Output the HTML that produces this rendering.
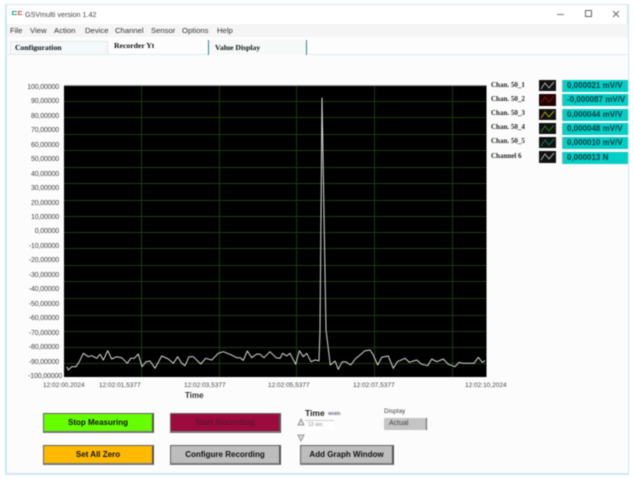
<!DOCTYPE html>
<html><head><meta charset="utf-8">
<style>
html,body{margin:0;padding:0;background:#fff;}
body{width:634px;height:479px;overflow:hidden;position:relative;font-family:"Liberation Sans",sans-serif;}
#w{position:absolute;left:0;top:0;width:634px;height:479px;filter:blur(0.6px);overflow:hidden;}
.a{position:absolute;white-space:nowrap;}
.m{font-size:7.7px;color:#333;top:25px;line-height:11px;}
.t{font:bold 7.7px "Liberation Serif",serif;color:#111;line-height:10px;}
.y{font:7px "Liberation Sans",sans-serif;color:#444;left:20px;width:39px;text-align:right;line-height:9px;letter-spacing:-.15px;}
.x{font:6.5px "Liberation Sans",sans-serif;color:#444;top:381px;line-height:9px;}
.l{font:bold 7px "Liberation Serif",serif;color:#222;left:491px;line-height:9px;}
.v{left:562px;width:66px;height:12px;background:#03cfc6;border-left:1px solid #9aa;font:bold 8px "Liberation Sans",sans-serif;color:#043c42;line-height:12px;padding-left:4px;box-sizing:border-box;}
.b{box-sizing:border-box;border:1px solid #666;border-right:2px solid #555;border-bottom:2px solid #777;font:bold 8px "Liberation Sans",sans-serif;text-align:center;color:#111;height:20px;line-height:17px;}
</style></head><body><div id="w">
<div class="a" style="left:5px;top:4px;width:624px;height:471px;box-sizing:border-box;border:2px solid #cfe6f2;border-top:1px solid #d5e9f3;background:#fff;"></div>
<div class="a" style="left:7px;top:24px;width:621px;height:13px;background:#f5f5f5;"></div>
<div class="a" style="left:7px;top:37px;width:621px;height:17px;background:#fdfdfd;"></div>
<div class="a" style="left:8px;top:54px;width:620px;height:419px;background:#fcfcfc;border-top:1px solid #dcecee;box-sizing:border-box;"></div>

<div class="a" style="left:12px;top:11px;width:5px;height:4px;border:1px solid #18a08c;border-right:0;box-sizing:border-box;"></div>
<div class="a" style="left:18px;top:11px;width:4px;height:4px;border:1px solid #d05050;border-right:0;box-sizing:border-box;"></div>
<div class="a" style="left:25px;top:9px;font-size:7.2px;color:#444;line-height:11px;">GSVmulti version 1.42</div>
<div class="a" style="left:557px;top:14px;width:7px;height:1px;background:#777;"></div>
<div class="a" style="left:585px;top:10px;width:7px;height:7px;border:1px solid #666;box-sizing:border-box;"></div>
<svg class="a" style="left:612px;top:10px;" width="8" height="8"><path d="M1 1L7 7M7 1L1 7" stroke="#666" stroke-width="1"/></svg>

<div class="a m" style="left:10px;">File</div>
<div class="a m" style="left:30px;">View</div>
<div class="a m" style="left:54px;">Action</div>
<div class="a m" style="left:85px;">Device</div>
<div class="a m" style="left:115px;">Channel</div>
<div class="a m" style="left:151px;">Sensor</div>
<div class="a m" style="left:182px;">Options</div>
<div class="a m" style="left:217px;">Help</div>

<div class="a" style="left:10px;top:41px;width:98px;height:13px;background:#f5f8f8;border:1px solid #d8ebea;border-bottom:0;box-sizing:border-box;"></div>
<div class="a" style="left:208px;top:40px;width:99px;height:15px;background:#f7f9f9;border-left:1px solid #2f8b84;border-right:1px solid #2f8b84;box-sizing:border-box;"></div>
<div class="a t" style="left:15px;top:43px;">Configuration</div>
<div class="a t" style="left:114px;top:41px;">Recorder Yt</div>
<div class="a t" style="left:215px;top:43px;">Value Display</div>

<div class="a y" style="top:83px;">100,00000</div>
<div class="a y" style="top:97px;">90,00000</div>
<div class="a y" style="top:112px;">80,00000</div>
<div class="a y" style="top:126px;">70,00000</div>
<div class="a y" style="top:141px;">60,00000</div>
<div class="a y" style="top:155px;">50,00000</div>
<div class="a y" style="top:170px;">40,00000</div>
<div class="a y" style="top:184px;">30,00000</div>
<div class="a y" style="top:199px;">20,00000</div>
<div class="a y" style="top:213px;">10,00000</div>
<div class="a y" style="top:227px;">0,00000</div>
<div class="a y" style="top:242px;">-10,00000</div>
<div class="a y" style="top:256px;">-20,00000</div>
<div class="a y" style="top:271px;">-30,00000</div>
<div class="a y" style="top:285px;">-40,00000</div>
<div class="a y" style="top:300px;">-50,00000</div>
<div class="a y" style="top:314px;">-60,00000</div>
<div class="a y" style="top:329px;">-70,00000</div>
<div class="a y" style="top:343px;">-80,00000</div>
<div class="a y" style="top:358px;">-90,00000</div>
<div class="a y" style="top:372px;left:18px;width:44px;">-100,00000</div>

<svg class="a" style="left:0;top:0;" width="634" height="479">
<rect x="64" y="85.5" width="422.5" height="291.5" fill="#000"/>
<path d="M64 85.5H486" stroke="#999" stroke-width="1"/>
<g stroke="#1a3a12" stroke-width="1" fill="none">
<path d="M141.5 86V377M219.5 86V377M296.5 86V377M374.5 86V377M452.5 86V377"/>
<path d="M64 101.5H486M64 117.5H486M64 134.5H486M64 150.5H486M64 167.5H486M64 183.5H486M64 200.5H486M64 216.5H486M64 232.5H486M64 248.5H486M64 265.5H486M64 281.5H486M64 298.5H486M64 315.5H486M64 331.5H486M64 347.5H486M64 363.5H486"/>
</g>
<polyline fill="none" stroke="#d8d8d3" stroke-width="1" stroke-linejoin="round" points="66.7,366.7 68.3,370 71.7,366.7 76,366.7 79.3,361.7 83.3,353.3 88.3,356.7 91.7,355.7 96.7,358.3 100,354.3 103.3,360 107.7,350.7 111.7,359 116.7,356.7 121.7,357.7 127.3,363.3 130.7,358.3 134.3,358.3 138.3,354 142,366.7 146,361.7 150,361 155,368.3 161.7,356 168.3,359 173.3,363.3 177.7,356.7 181.7,363.3 185,365.7 189,356.7 193.3,356.7 200.7,364 205.7,358.3 211.7,360 218.3,353.3 223.3,351.7 230,354.3 236.7,357.7 240,357.7 243.3,360.3 247.3,351 251.7,357.7 256.7,354 260,354.3 264,357.7 270,351.7 276,357.7 280,358.3 282.7,353.3 286.7,356 290,353.3 295.7,364.3 299.3,350.7 303.3,356.7 306.7,353.3 311,361.7 315,360 319,360.7 320,330 322,98 326,330 330.3,365 335,361 338.3,369.3 342.3,361.7 345.7,361.7 350.7,365 355,359.3 360,355 365,350.7 370,350 373.3,355 377.7,365 381.7,357.3 388.3,356 393.3,368.3 397.3,361.7 405,358.3 409.3,362.3 416.7,360 421.7,364.3 427.7,365.7 431.7,359 436.7,361.7 443.3,359 448.3,364.3 455,366.7 459,362.3 463.3,363.3 474,363.3 478.3,357.3 482.3,362.3 485,360.7"/>
<g fill="none" stroke-width="1">
<rect x="539" y="80" width="17" height="11" fill="#111" stroke="none"/><path d="M541 89L545 83L549 88L554 82" stroke="#aaa"/>
<rect x="539" y="94" width="17" height="12" fill="#200" stroke="none"/><path d="M541 103L545 97L549 102L554 96" stroke="#801010"/>
<rect x="539" y="109" width="17" height="11" fill="#111" stroke="none"/><path d="M541 118L545 112L549 117L554 111" stroke="#a89a18"/>
<rect x="539" y="123" width="17" height="11" fill="#111" stroke="none"/><path d="M541 132L545 126L549 131L554 125" stroke="#2c7c18"/>
<rect x="539" y="137" width="17" height="11" fill="#111" stroke="none"/><path d="M541 146L545 140L549 145L554 139" stroke="#167068"/>
<rect x="539" y="151" width="17" height="12" fill="#111" stroke="none"/><path d="M541 160L545 154L549 159L554 153" stroke="#aaa"/>
</g>
<path d="M301 419L298 425H304ZM298 435H304L301 441Z" fill="#ddd" stroke="#999" stroke-width="1"/>
<path d="M414 426L417 428L420 425" fill="none" stroke="#888" stroke-width="1"/>
</svg>

<div class="a x" style="left:43px;">12:02:00,2024</div>
<div class="a x" style="left:99px;">12:02:01,5377</div>
<div class="a x" style="left:184px;">12:02:03,5377</div>
<div class="a x" style="left:268px;">12:02:05,5377</div>
<div class="a x" style="left:353px;">12:02:07,5377</div>
<div class="a x" style="left:465px;">12:02:10,2024</div>
<div class="a" style="left:185px;top:391px;font:bold 8px 'Liberation Sans',sans-serif;color:#333;line-height:10px;">Time</div>

<div class="a l" style="top:81px;">Chan. 50_1</div>
<div class="a l" style="top:95px;">Chan. 50_2</div>
<div class="a l" style="top:109px;">Chan. 50_3</div>
<div class="a l" style="top:123px;">Chan. 50_4</div>
<div class="a l" style="top:137px;">Chan. 50_5</div>
<div class="a l" style="top:152px;">Channel 6</div>

<div class="a v" style="top:80px;">0,000021 mV/V</div>
<div class="a v" style="top:94px;">-0,000087 mV/V</div>
<div class="a v" style="top:109px;">0,000044 mV/V</div>
<div class="a v" style="top:123px;">0,000048 mV/V</div>
<div class="a v" style="top:137px;">0,000010 mV/V</div>
<div class="a v" style="top:152px;">0,000013 N</div>

<div class="a b" style="left:43px;top:413px;width:111px;background:#66ff00;">Stop Measuring</div>
<div class="a b" style="left:170px;top:413px;width:111px;background:#9c0a3e;color:#5d1530;">Start Recording</div>
<div class="a b" style="left:43px;top:445px;width:111px;background:#ffba00;">Set All Zero</div>
<div class="a b" style="left:170px;top:445px;width:111px;background:#bdbdbd;">Configure Recording</div>
<div class="a b" style="left:300px;top:445px;width:94px;background:#bdbdbd;">Add Graph Window</div>

<div class="a" style="left:305px;top:408px;font:bold 8.5px 'Liberation Sans',sans-serif;color:#222;line-height:11px;">Time</div>
<div class="a" style="left:328px;top:410px;font:bold 4.5px 'Liberation Sans',sans-serif;color:#667;line-height:8px;">Width</div>
<div class="a" style="left:305px;top:420px;width:29px;height:10px;background:#fff;border-top:1px solid #ccc;box-sizing:border-box;font-size:5px;color:#888;line-height:9px;padding-left:3px;">13 sec</div>
<div class="a" style="left:384px;top:407px;font-size:6.5px;color:#444;line-height:9px;">Display</div>
<div class="a" style="left:384px;top:418px;width:43px;height:12px;background:#c4c4c4;border-right:1px solid #666;box-sizing:border-box;font-size:7px;color:#444;line-height:12px;padding-left:5px;">Actual</div>
</div></body></html>
